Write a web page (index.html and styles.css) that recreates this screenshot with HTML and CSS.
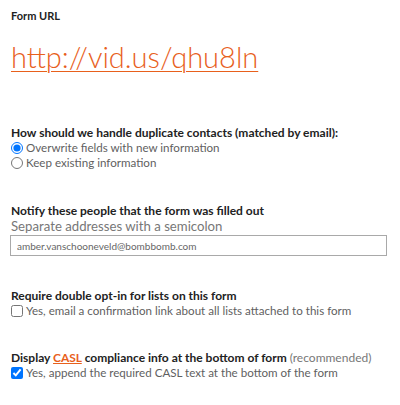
FILE: index.html
```html
<!DOCTYPE html>
<html>
<head>
<meta charset="utf-8">
<link rel="stylesheet" href="styles.css">
</head>
<body>
<div class="page">
  <section class="url-block">
    <div class="label">Form URL</div>
    <a class="form-url" href="#">http://vid.us/qhu8ln</a>
  </section>

  <section class="group g-dup">
    <div class="heading">How should we handle duplicate contacts (matched by email):</div>
    <label class="option"><input type="radio" name="dup" checked> Overwrite fields with new information</label>
    <label class="option"><input type="radio" name="dup"> Keep existing information</label>
  </section>

  <section class="group g-notify">
    <div class="heading">Notify these people that the form was filled out</div>
    <div class="hint">Separate addresses with a semicolon</div>
    <input class="text-input" type="text" value="amber.vanschooneveld@bombbomb.com">
  </section>

  <section class="group g-optin">
    <div class="heading">Require double opt-in for lists on this form</div>
    <label class="option"><input type="checkbox"> Yes, email a confirmation link about all lists attached to this form</label>
  </section>

  <section class="group g-casl">
    <div class="heading">Display <a class="casl" href="#">CASL</a> compliance info at the bottom of form <span class="rec">(recommended)</span></div>
    <label class="option"><input type="checkbox" checked> Yes, append the required CASL text at the bottom of the form</label>
  </section>
</div>
</body>
</html>
```

FILE: styles.css
```css
html, body {
  margin: 0;
  padding: 0;
  background: #fff;
}
body {
  font-family: Lato, "Noto Sans", sans-serif;
  color: #555;
}
.page {
  padding: 9px 11px 0 11px;
  display: flex;
  flex-direction: column;
}
.url-block {
  display: flex;
  flex-direction: column;
  align-items: flex-start;
}
.label {
  font-size: 11px;
  font-weight: 700;
  color: #222;
  line-height: 14px;
}
.form-url {
  margin-top: 16px;
  font-size: 29px;
  font-weight: 300;
  color: #e8601c;
  line-height: 36px;
  text-decoration: underline;
  text-decoration-thickness: 1px;
  text-underline-offset: 3px;
}
.group {
  display: flex;
  flex-direction: column;
  align-items: flex-start;
  white-space: nowrap;
}
.g-dup { margin-top: 51px; }
.g-notify { margin-top: 34px; }
.g-optin { margin-top: 33px; }
.g-casl { margin-top: 33px; }
.heading {
  font-size: 12px;
  font-weight: 700;
  color: #222;
  line-height: 14px;
}
.rec {
  font-weight: 400;
  color: #777;
}
.casl {
  color: #e8601c;
  text-decoration: underline;
}
.option {
  display: flex;
  align-items: center;
  font-size: 11.6px;
  line-height: 15px;
  color: #5f5f5f;
}
.option input {
  margin: 0 3px 0 0;
  width: 12px;
  height: 12px;
}
.hint {
  font-size: 13.2px;
  line-height: 16px;
  color: #777;
}
.text-input {
  box-sizing: border-box;
  margin-top: 1px;
  width: 377px;
  height: 21px;
  margin-left: -1px;
  border: 1px solid #a9a9a9;
  padding: 0 6px;
  font-family: Lato, "Noto Sans", sans-serif;
  font-size: 10px;
  color: #666;
}
```
